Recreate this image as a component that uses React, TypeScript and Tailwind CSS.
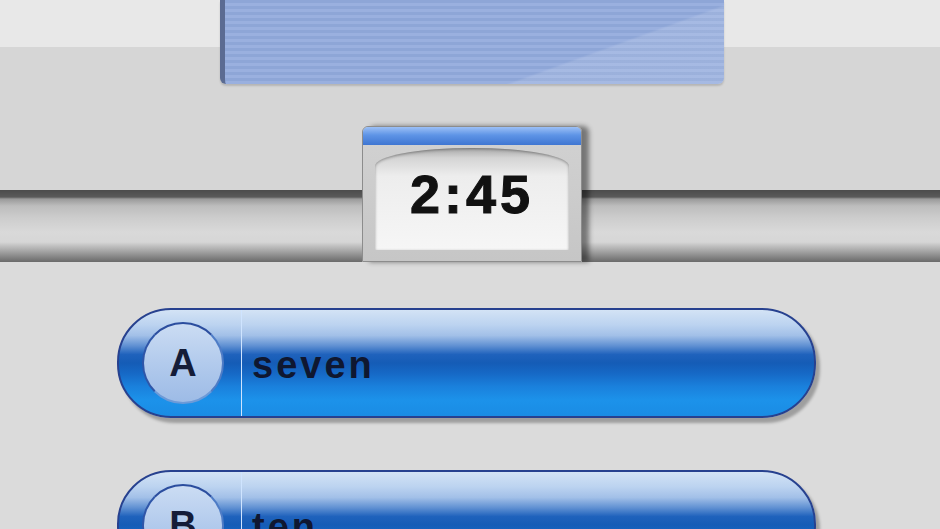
import * as React from 'react';

const font = { fontFamily: '"Liberation Sans", Arial, sans-serif' };

function Rail({ className }: { className: string }) {
  return (
    <div
      className={`h-[72px] bg-[linear-gradient(to_bottom,#4c4c4c_0px,#5a5a5a_7px,#9a9a9a_9px,#bdbdbd_16px,#cdcdcd_28px,#d9d9d9_42px,#d6d6d6_52px,#ababab_60px,#8a8a8a_66px,#6a6a6a_72px)] ${className}`}
    />
  );
}

function Timer() {
  return (
    <div className="relative z-10 flex h-[136px] w-[220px] flex-col rounded-t-[6px] border border-[#8c8c8c] bg-[linear-gradient(to_bottom,#d2d2d2,#c6c6c6)] shadow-[7px_0_5px_rgba(0,0,0,0.45)]">
      <div className="h-[18px] rounded-t-[5px] bg-[linear-gradient(to_bottom,#9cc0f6_0%,#5e94e6_45%,#3f76d2_100%)]" />
      <div className="mx-[12px] mt-[3px] flex h-[102px] items-center justify-center rounded-t-[50%_18px] bg-[linear-gradient(to_bottom,#a8a8a8_0px,#d4d4d4_10px,#ededed_28px,#f6f6f6_100%)] shadow-[inset_0_1px_3px_rgba(0,0,0,0.35)]">
        <span
          style={font}
          className="-mt-[10px] text-[54px] font-bold leading-none tracking-[4px] text-[#111] [-webkit-text-stroke:1px_#111]"
        >
          2:45
        </span>
      </div>
    </div>
  );
}

function Option({ letter, text }: { letter: string; text: string }) {
  return (
    <div className="ml-[117px] flex h-[110px] w-[699px] overflow-hidden rounded-[54px] border-2 border-[#27418f] bg-[linear-gradient(to_bottom,#d3e3f5_0%,#bcd3f0_14%,#a2c0e8_24%,#5e8fd2_34%,#1f62bc_42%,#155cb6_50%,#1669c6_60%,#1a80dc_72%,#1c92ea_85%,#1a8ce4_100%)] shadow-[4px_5px_3px_rgba(0,0,0,0.28)]">
      <div className="flex w-[123px] shrink-0 items-center justify-center border-r border-r-[#cfe4ff] pl-[6px]">
        <div className="flex h-[82px] w-[82px] items-center justify-center rounded-full border-2 border-t-[#2b4d9e] border-l-[#2f56a8] border-r-[#4e7cc6] border-b-[#6c9ad8] bg-[linear-gradient(to_bottom,#cbdcf3,#b0c9ec_55%,#9dbbe6)]">
          <span style={font} className="text-[38px] font-bold leading-none text-[#141c38]">
            {letter}
          </span>
        </div>
      </div>
      <div className="flex items-center pl-[10px]">
        <span style={font} className="mt-[4px] text-[38px] font-bold leading-none tracking-[3px] text-[#0f1730]">
          {text}
        </span>
      </div>
    </div>
  );
}

export default function App() {
  return (
    <div className="h-[529px] w-[940px] overflow-hidden bg-[#dbdbdb]">
      <div className="bg-[linear-gradient(to_bottom,#e8e8e8_0px,#e8e8e8_47px,#d6d6d6_47px,#d6d6d6_100%)]">
        {/* striped panel */}
        <div className="ml-[220px] h-[84px] w-[504px] rounded-b-[6px] border-l-[5px] border-l-[#5b6b92] bg-[linear-gradient(160deg,transparent_0%,transparent_70%,rgba(255,255,255,0.12)_71%,rgba(255,255,255,0.12)_100%),repeating-linear-gradient(to_bottom,#8ea6d7_0px,#8ea6d7_3px,#9ab0df_3px,#9ab0df_6px)] shadow-[0_2px_2px_rgba(0,0,0,0.15)]" />
        <div className="mt-[42px] flex items-end">
          <Rail className="w-[362px]" />
          <Timer />
          <Rail className="flex-1" />
        </div>
      </div>
      <div className="flex flex-col gap-[52px] pt-[46px]">
        <Option letter="A" text="seven" />
        <Option letter="B" text="ten" />
      </div>
    </div>
  );
}
